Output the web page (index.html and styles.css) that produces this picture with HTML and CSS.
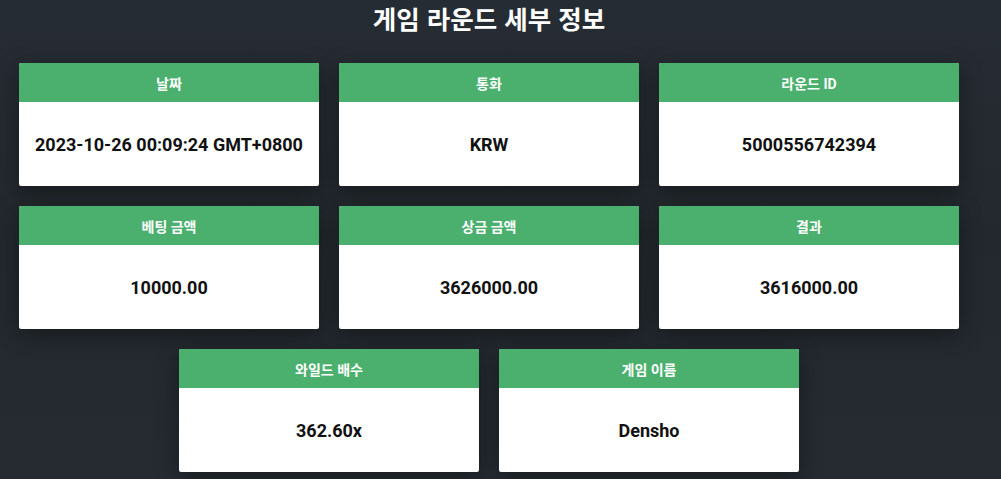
FILE: index.html
```html
<!DOCTYPE html>
<html lang="ko">
<head>
  <meta charset="UTF-8">
  <meta name="viewport" content="width=device-width, initial-scale=1">
  <title>게임 라운드 세부 정보</title>
  <link rel="stylesheet" href="styles.css">
</head>
<body>
  <h1>게임 라운드 세부 정보</h1>

  <main class="cards">
    <div class="card">
      <div class="card-head">날짜</div>
      <div class="card-body">2023-10-26 00:09:24 GMT+0800</div>
    </div>
    <div class="card">
      <div class="card-head">통화</div>
      <div class="card-body">KRW</div>
    </div>
    <div class="card">
      <div class="card-head">라운드 ID</div>
      <div class="card-body">5000556742394</div>
    </div>
    <div class="card">
      <div class="card-head">베팅 금액</div>
      <div class="card-body">10000.00</div>
    </div>
    <div class="card">
      <div class="card-head">상금 금액</div>
      <div class="card-body">3626000.00</div>
    </div>
    <div class="card">
      <div class="card-head">결과</div>
      <div class="card-body">3616000.00</div>
    </div>
    <div class="card">
      <div class="card-head">와일드 배수</div>
      <div class="card-body">362.60x</div>
    </div>
    <div class="card">
      <div class="card-head">게임 이름</div>
      <div class="card-body">Densho</div>
    </div>
  </main>
</body>
</html>
```

FILE: styles.css
```css
* { box-sizing: border-box; }
html, body { height: 100%; }
body {
  margin: 0;
  font-family: Roboto, "Noto Sans CJK KR", sans-serif;
  background: linear-gradient(180deg, #262c33 0%, #22282d 50%, #252b31 100%);
  color: #000;
  overflow: hidden;
}
h1 {
  margin: 0;
  width: 978px;
  height: 33px;
  text-align: center;
  color: #fff;
  font-size: 25.5px;
  line-height: 36px;
  font-weight: 700;
  font-family: "Noto Sans CJK KR", sans-serif;
}
.cards {
  width: 940px;
  margin: 30px 0 0 19px;
  display: flex;
  flex-wrap: wrap;
  justify-content: center;
  gap: 20px;
}
.card {
  width: 300px;
  background: #fff;
  border-radius: 2px;
  overflow: hidden;
  box-shadow: 0 6px 22px rgba(0,0,0,0.35);
}
.card-head {
  height: 39px;
  display: flex;
  align-items: center;
  justify-content: center;
  background: #4bb06e;
  color: #fff;
  font-size: 14px;
  font-weight: 700;
}
.card-body {
  height: 84px;
  display: flex;
  align-items: center;
  justify-content: center;
  font-size: 18px;
  font-weight: 700;
  color: #111;
}
```
